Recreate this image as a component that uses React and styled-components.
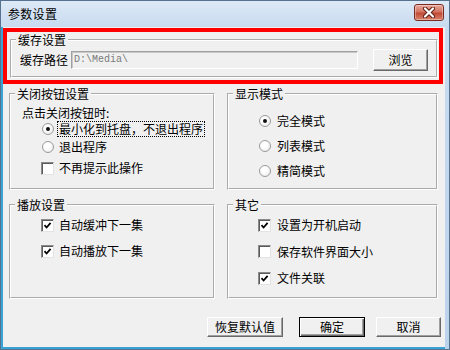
import styled, { createGlobalStyle } from "styled-components";

const GlobalStyle = createGlobalStyle`
  html, body { margin: 0; padding: 0; background: #fff; overflow: hidden; }
  body {
    font-family: "Noto Sans CJK SC", "Noto Sans", sans-serif;
    font-size: 12px;
    color: #000;
  }
  * { box-sizing: border-box; }
`;

const Window = styled.div`
  width: 450px;
  height: 350px;
  display: flex;
  flex-direction: column;
  border: 1px solid #56728e;
  padding-right: 4px;
  background: linear-gradient(#dde9f6, #c8dbf0 26px, #bcd3ec);
`;

const TitleBar = styled.div`
  height: 26px;
  flex: none;
  display: flex;
  align-items: center;
  justify-content: space-between;
  padding: 0 1px 0 7px;
`;

const Title = styled.span`
  font-size: 12px;
  line-height: 14px;
  letter-spacing: 0.3px;
`;

const CloseButton = styled.div`
  align-self: flex-start;
  margin-top: 3px;
  width: 30px;
  height: 17px;
  border: 1px solid #7a2a20;
  border-radius: 3px;
  background: linear-gradient(#e8a89b, #d47462 45%, #c14a36 55%, #d9826c);
  box-shadow: inset 0 0 0 1px rgba(255, 255, 255, 0.35);
  display: grid;
  place-items: center;
`;

const Client = styled.div`
  position: relative;
  flex: 1;
  display: flex;
  flex-direction: column;
  background: #f0f0f0;
  border-left: 2px solid #3aa3d6;
  border-bottom: 2px solid #3aa3d6;
  padding: 6px 4px 0 6px;
`;

const GroupBox = styled.fieldset`
  margin: 0;
  padding: 0;
  min-width: 0;
  border: 2px groove #fff;
  height: ${(p) => p.$h || "auto"};
  width: ${(p) => p.$w || "auto"};
  margin-left: ${(p) => p.$ml || 0}px;
`;

const Legend = styled.legend`
  margin-left: 4px;
  padding: 0 2px;
  font-size: 12px;
  line-height: 14px;
`;

const GroupBody = styled.div`
  display: flex;
  flex-direction: column;
  padding: ${(p) => p.$pad};
`;

const PathRow = styled.div`
  display: flex;
  align-items: center;
  height: 22px;
`;

const FieldLabel = styled.span`
  line-height: 14px;
`;

const PathInput = styled.div`
  margin-left: 3px;
  width: 287px;
  height: 18px;
  border: 1px solid;
  border-color: #a0a0a0 #fff #fff #a0a0a0;
  box-shadow: inset 1px 1px 0 #c8c8c8;
  background: #f0f0f0;
  color: #7a7a7a;
  font-family: "Liberation Mono", monospace;
  font-size: 10px;
  line-height: 16px;
  padding-left: 2px;
`;

const PushButton = styled.div`
  width: ${(p) => p.$w}px;
  height: ${(p) => p.$h || 20}px;
  margin-left: ${(p) => p.$ml || 0}px;
  display: grid;
  place-items: center;
  background: #f0f0f0;
  font-size: 12px;
  line-height: 14px;
  border: 1px solid;
  border-color: ${(p) => (p.$default ? "#000" : "#fff #696969 #696969 #fff")};
  box-shadow: ${(p) =>
    p.$default
      ? "inset 1px 1px 0 #fff, inset -1px -1px 0 #696969, inset -2px -2px 0 #a0a0a0"
      : "inset -1px -1px 0 #a0a0a0"};
`;

const OptionsGrid = styled.div`
  margin-top: 9px;
  display: grid;
  grid-template-columns: 206px 211px;
  grid-template-rows: 103px 101px;
  column-gap: 12px;
  row-gap: 8px;
`;

const HeaderText = styled.div`
  line-height: 14px;
`;

const OptionRow = styled.div`
  display: flex;
  align-items: center;
  height: ${(p) => p.$h}px;
  margin-top: ${(p) => p.$mt || 0}px;
  margin-left: ${(p) => p.$ml || 0}px;
`;

const Slot = styled.span`
  width: 13px;
  height: 13px;
  flex: none;
  display: grid;
  place-items: center;
  margin-right: ${(p) => p.$gap || 3}px;
`;

const RadioMark = styled.span`
  position: relative;
  width: 12px;
  height: 12px;
  border-radius: 50%;
  border: 1px solid #9b9b9b;
  background: radial-gradient(circle at 40% 35%, #fff 30%, #e4e4e4);

  &::after {
    content: "";
    display: ${(p) => (p.$on ? "block" : "none")};
    position: absolute;
    left: 3px;
    top: 3px;
    width: 4px;
    height: 4px;
    border-radius: 50%;
    background: #111;
  }
`;

const CheckMark = styled.span`
  width: 13px;
  height: 13px;
  border: 1px solid;
  border-color: #8a8a8a #e3e3e3 #e3e3e3 #8a8a8a;
  box-shadow: inset 1px 1px 0 #5a5a5a;
  background: #fff;
  display: grid;
  place-items: center;
`;

const OptionText = styled.span`
  line-height: 14px;
  padding: 0 1px;
  border: 1px ${(p) => (p.$focus ? "dotted #000" : "solid transparent")};
`;

const ButtonBar = styled.div`
  margin-top: 18px;
  display: flex;
  justify-content: flex-end;
`;

const Highlight = styled.div`
  position: absolute;
  left: 0;
  top: 1px;
  width: 440px;
  height: 56px;
  border: 4px solid #ff0000;
  pointer-events: none;
`;

const Radio = ({ on, children, focus, h, gap }) => (
  <OptionRow $h={h}>
    <Slot $gap={gap}>
      <RadioMark $on={on} />
    </Slot>
    <OptionText $focus={focus}>{children}</OptionText>
  </OptionRow>
);

const Check = ({ on, children, h, mt, gap }) => (
  <OptionRow $h={h} $mt={mt}>
    <Slot $gap={gap}>
      <CheckMark>
        {on && (
          <svg width="9" height="9" viewBox="0 0 9 9">
            <path d="M1.5 4.2 L3.6 6.5 L7.6 1.8" fill="none" stroke="#000" strokeWidth="1.8" />
          </svg>
        )}
      </CheckMark>
    </Slot>
    <OptionText>{children}</OptionText>
  </OptionRow>
);

export default function App() {
  return (
    <>
      <GlobalStyle />
      <Window>
        <TitleBar>
          <Title>参数设置</Title>
          <CloseButton>
            <svg width="14" height="11" viewBox="0 0 14 11">
              <path d="M3 1.5 L11 9.5 M11 1.5 L3 9.5" stroke="#5a1a12" strokeWidth="4" strokeLinecap="round" />
              <path d="M3 1.5 L11 9.5 M11 1.5 L3 9.5" stroke="#fff" strokeWidth="2.2" strokeLinecap="round" />
            </svg>
          </CloseButton>
        </TitleBar>
        <Client>
          <GroupBox $w="428px" $ml={1}>
            <Legend>缓存设置</Legend>
            <GroupBody $pad="2px 8px 5px 8px">
              <PathRow>
                <FieldLabel>缓存路径</FieldLabel>
                <PathInput>{"D:\\Media\\"}</PathInput>
                <PushButton $w={55} $h={22} $ml={15}>浏览</PushButton>
              </PathRow>
            </GroupBody>
          </GroupBox>

          <OptionsGrid>
            <GroupBox>
              <Legend>关闭按钮设置</Legend>
              <GroupBody $pad="5px 0 0 11px">
                <HeaderText>点击关闭按钮时:</HeaderText>
                <OptionRow $h={18} $ml={19}>
                  <Slot><RadioMark $on /></Slot>
                  <OptionText $focus>最小化到托盘，不退出程序</OptionText>
                </OptionRow>
                <OptionRow $h={18} $ml={19}>
                  <Slot><RadioMark /></Slot>
                  <OptionText>退出程序</OptionText>
                </OptionRow>
                <OptionRow $h={18} $mt={3} $ml={19}>
                  <Slot>
                    <CheckMark />
                  </Slot>
                  <OptionText>不再提示此操作</OptionText>
                </OptionRow>
              </GroupBody>
            </GroupBox>

            <GroupBox>
              <Legend>显示模式</Legend>
              <GroupBody $pad="7px 0 0 29px">
                <Radio on h={25} gap={4}>完全模式</Radio>
                <Radio h={25} gap={4}>列表模式</Radio>
                <Radio h={25} gap={4}>精简模式</Radio>
              </GroupBody>
            </GroupBox>

            <GroupBox>
              <Legend>播放设置</Legend>
              <GroupBody $pad="0 0 0 30px">
                <Check on h={26}>自动缓冲下一集</Check>
                <Check on h={26}>自动播放下一集</Check>
              </GroupBody>
            </GroupBox>

            <GroupBox>
              <Legend>其它</Legend>
              <GroupBody $pad="0 0 0 29px">
                <Check on h={26.5} gap={4}>设置为开机启动</Check>
                <Check h={26.5} gap={4}>保存软件界面大小</Check>
                <Check on h={26.5} gap={4}>文件关联</Check>
              </GroupBody>
            </GroupBox>
          </OptionsGrid>

          <ButtonBar>
            <PushButton $w={76}>恢复默认值</PushButton>
            <PushButton $w={66} $ml={16} $default>确定</PushButton>
            <PushButton $w={65} $ml={11}>取消</PushButton>
          </ButtonBar>

          <Highlight />
        </Client>
      </Window>
    </>
  );
}
